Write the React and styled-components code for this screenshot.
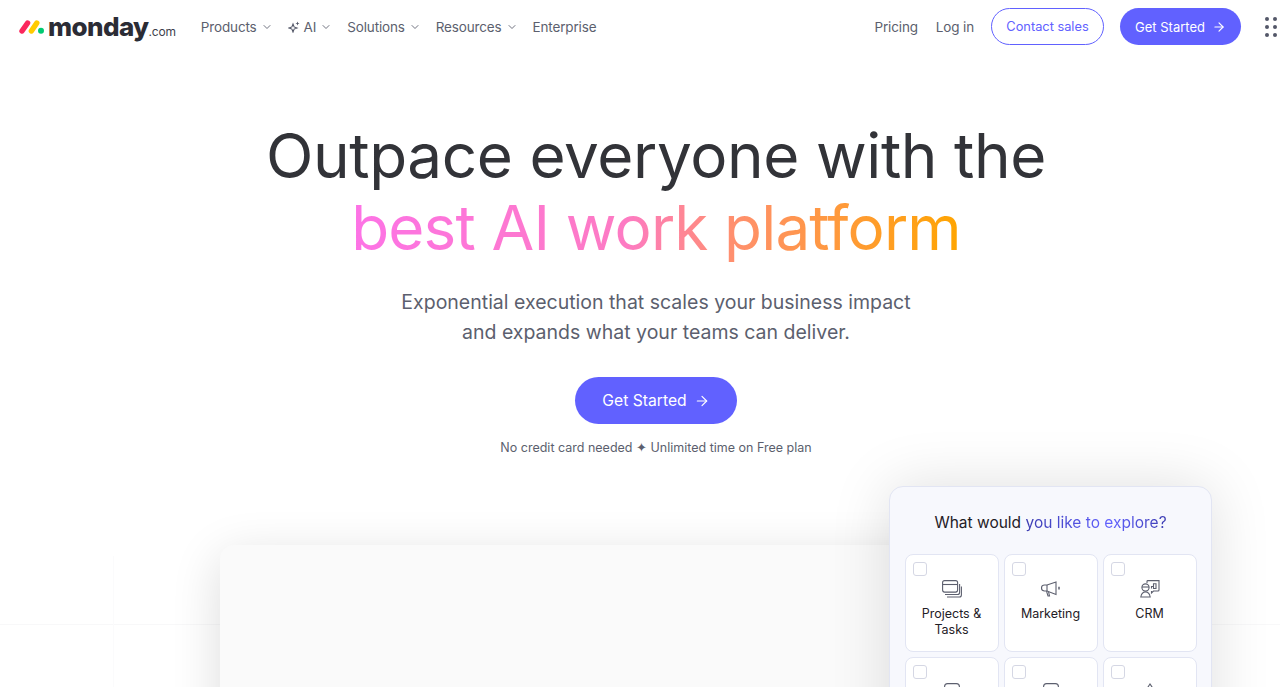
import React from "react";
import styled, { createGlobalStyle } from "styled-components";
import { ChevronDown, ArrowRight } from "lucide-react";

const font = `"Inter", "Liberation Sans", sans-serif`;

const GlobalStyle = createGlobalStyle`
  html, body {
    margin: 0;
    padding: 0;
    height: 100%;
    background: #fff;
    font-family: ${font};
  }
  * { box-sizing: border-box; }
`;

const navLinks = [
  { label: "Products", caret: true },
  { label: "AI", caret: true, sparkle: true },
  { label: "Solutions", caret: true },
  { label: "Resources", caret: true },
  { label: "Enterprise" },
];

const SparkIcon = () => (
  <svg width="12" height="12" viewBox="0 0 12 12" fill="none" stroke="#535768" strokeWidth="1.1">
    <path d="M5 3 L6.1 5.9 L9 7 L6.1 8.1 L5 11 L3.9 8.1 L1 7 L3.9 5.9 Z" />
    <path d="M9.5 .5 L10.1 1.9 L11.5 2.5 L10.1 3.1 L9.5 4.5 L8.9 3.1 L7.5 2.5 L8.9 1.9 Z" fill="#535768" stroke="none" />
  </svg>
);

const LogoMark = () => (
  <svg width="26" height="14" viewBox="0 0 26 14">
    <line x1="3" y1="11" x2="8.6" y2="3" stroke="#fb275d" strokeWidth="5.4" strokeLinecap="round" />
    <line x1="12.4" y1="11" x2="17.8" y2="3" stroke="#ffcb00" strokeWidth="5.4" strokeLinecap="round" />
    <circle cx="22" cy="10.8" r="3" fill="#00ca72" />
  </svg>
);

const MegaphoneIcon = () => (
  <svg width="20" height="16" viewBox="0 0 20 16" fill="none" stroke="#5c5f6e" strokeWidth="1.1">
    <path d="M15 1 L6 4 H3.5 a3 3 0 0 0 0 6 H6 L15 13.5 Z" />
    <path d="M6 4 V10 M5.5 10.2 L7 15 H8.5 L7.6 11" />
    <path d="M18 5.8 V8.4" strokeWidth="1.5" />
  </svg>
);

const ProjectsIcon = () => (
  <svg width="20" height="18" viewBox="0 0 20 18" fill="none" stroke="#5c5f6e" strokeWidth="1.1">
    <rect x=".6" y=".6" width="15" height="11.5" rx="2" />
    <path d="M.6 4.5 H15.6" />
    <path d="M17.6 4 V12.5 a2 2 0 0 1 -2 2 H3" />
    <path d="M19.4 6.5 V15 a2 2 0 0 1 -2 2 H5" />
  </svg>
);

const CrmIcon = () => (
  <svg width="20" height="18" viewBox="0 0 20 18" fill="none" stroke="#5c5f6e" strokeWidth="1.1">
    <circle cx="5.5" cy="7.5" r="3.6" />
    <path d="M2 7 H9" />
    <path d="M.8 17 C1.5 13 3 12 5.5 12 S9.5 13 10.2 17 Z" />
    <path d="M7 3 V1.4 a.8 .8 0 0 1 .8 -.8 H19 V10 a1 1 0 0 1 -1 1 H13.5 L11.5 13 V11" />
    <path d="M11.5 8.5 V6.5 H13.5 V8.5 M13.5 8.5 V3.8 H16 V8.5 Z" />
  </svg>
);

const ScreenIcon = () => (
  <svg width="16" height="18" viewBox="0 0 16 18" fill="none" stroke="#5c5f6e" strokeWidth="1.1">
    <rect x=".6" y=".6" width="14.8" height="16" rx="3" />
  </svg>
);

const PeakIcon = () => (
  <svg width="20" height="18" viewBox="0 0 20 18" fill="none" stroke="#5c5f6e" strokeWidth="1.1">
    <path d="M8 4 L10 1 L12 4 V16 H8 Z" />
  </svg>
);

const options = [
  { label: "Projects & Tasks", Icon: ProjectsIcon },
  { label: "Marketing", Icon: MegaphoneIcon },
  { label: "CRM", Icon: CrmIcon },
  { Icon: ScreenIcon },
  { Icon: ScreenIcon },
  { Icon: PeakIcon },
];

const App = () => (
  <>
    <GlobalStyle />
    <Page>
      <Header>
        <Logo>
          <LogoMark />
          <LogoWord>monday</LogoWord>
          <LogoDomain>.com</LogoDomain>
        </Logo>
        <Nav>
          {navLinks.map((link) => (
            <NavLink key={link.label}>
              {link.sparkle && <SparkIcon />}
              {link.label}
              {link.caret && <ChevronDown size={12} strokeWidth={1.75} />}
            </NavLink>
          ))}
        </Nav>
        <HeaderActions>
          <NavLink>Pricing</NavLink>
          <NavLink>Log in</NavLink>
          <OutlineButton>Contact sales</OutlineButton>
          <PrimaryButton>
            Get Started <ArrowRight size={14} strokeWidth={2} />
          </PrimaryButton>
          <DotsGrid>
            {Array.from({ length: 6 }).map((_, i) => (
              <Dot key={i} />
            ))}
          </DotsGrid>
        </HeaderActions>
      </Header>

      <Hero>
        <Title>
          Outpace everyone with the
          <br />
          <GradientText>best AI work platform</GradientText>
        </Title>
        <Subtitle>
          Exponential execution that scales your business impact
          <br />
          and expands what your teams can deliver.
        </Subtitle>
        <HeroButton>
          Get Started <ArrowRight size={16} strokeWidth={1.75} />
        </HeroButton>
        <Note>No credit card needed ✦ Unlimited time on Free plan</Note>
      </Hero>

      <Showcase>
        <GridLineH />
        <GridLineV />
        <MockBoard />
        <ExplorePanel>
          <PanelTitle>
            What would <PanelAccent>you like to explore?</PanelAccent>
          </PanelTitle>
          <OptionGrid>
            {options.map(({ label, Icon }, i) => (
              <OptionCard key={i}>
                <Check />
                <OptionIcon>
                  <Icon />
                </OptionIcon>
                {label && <OptionLabel>{label}</OptionLabel>}
              </OptionCard>
            ))}
          </OptionGrid>
        </ExplorePanel>
      </Showcase>
    </Page>
  </>
);

const Page = styled.div`
  width: 100%;
  height: 687px;
  overflow: hidden;
  background: #fff;
`;

const Header = styled.header`
  height: 53px;
  display: flex;
  align-items: center;
  padding: 0 3px 0 19px;
`;

const Logo = styled.div`
  display: flex;
  align-items: baseline;
  color: #2b2c35;
  svg {
    align-self: center;
    margin-right: 3px;
  }
`;

const LogoWord = styled.span`
  font-size: 26px;
  font-weight: 800;
  letter-spacing: -0.6px;
`;

const LogoDomain = styled.span`
  font-size: 12px;
  letter-spacing: -0.2px;
  color: #3d3f4c;
`;

const Nav = styled.nav`
  display: flex;
  align-items: center;
  gap: 15px;
  margin-left: 25px;
`;

const NavLink = styled.a`
  display: flex;
  align-items: center;
  gap: 4px;
  font-size: 13.5px;
  letter-spacing: -0.15px;
  color: #5c5f6e;
  white-space: nowrap;
`;

const HeaderActions = styled.div`
  display: flex;
  align-items: center;
  gap: 18px;
  margin-left: auto;
`;

const OutlineButton = styled.button`
  width: 113px;
  height: 37px;
  margin-left: -1px;
  border: 1.5px solid #6161ff;
  border-radius: 19px;
  background: #fff;
  color: #6161ff;
  font-family: ${font};
  font-size: 12.8px;
  padding: 0;
`;

const PrimaryButton = styled.button`
  display: flex;
  align-items: center;
  justify-content: center;
  gap: 7px;
  width: 121px;
  height: 37px;
  margin-left: -2px;
  border: none;
  border-radius: 19px;
  background: #6161ff;
  color: #fff;
  font-family: ${font};
  font-size: 13px;
  padding: 0;
`;

const DotsGrid = styled.div`
  display: grid;
  grid-template-columns: repeat(2, 4px);
  grid-auto-rows: 4px;
  gap: 4px;
  margin-left: 6px;
`;

const Dot = styled.span`
  width: 4px;
  height: 4px;
  border-radius: 50%;
  background: #535768;
`;

const Hero = styled.section`
  display: flex;
  flex-direction: column;
  align-items: center;
  padding-top: 67px;
  padding-left: 32px;
`;

const Title = styled.h1`
  margin: 0;
  text-align: center;
  font-size: 62px;
  font-weight: 400;
  line-height: 72px;
  letter-spacing: -0.4px;
  color: #323338;
`;

const GradientText = styled.span`
  letter-spacing: -0.85px;
  background: linear-gradient(90deg, #fd73e6 0%, #fd7bc3 45%, #ff8f70 62%, #ffa500 100%);
  -webkit-background-clip: text;
  background-clip: text;
  color: transparent;
`;

const Subtitle = styled.p`
  margin: 23px 0 0;
  text-align: center;
  font-size: 19.5px;
  font-weight: 400;
  line-height: 30px;
  color: #5c5f6e;
`;

const HeroButton = styled.button`
  display: flex;
  align-items: center;
  justify-content: center;
  gap: 7px;
  width: 162px;
  height: 47px;
  margin-top: 30px;
  border: none;
  border-radius: 24px;
  background: #6161ff;
  color: #fff;
  font-family: ${font};
  font-size: 15.7px;
`;

const Note = styled.div`
  margin-top: 16px;
  font-size: 12.5px;
  line-height: 16px;
  color: #5c5f6e;
`;

const Showcase = styled.section`
  position: relative;
  height: 240px;
`;

const GridLineH = styled.div`
  position: absolute;
  left: 0;
  right: 0;
  top: 168px;
  height: 1px;
  background: #f8f8f9;
`;

const GridLineV = styled.div`
  position: absolute;
  left: 113px;
  top: 100px;
  bottom: 0;
  width: 1px;
  background: #fbfbfc;
`;

const MockBoard = styled.div`
  position: absolute;
  left: 220px;
  top: 89px;
  width: 840px;
  height: 400px;
  border-radius: 14px;
  background: #fafafa;
  box-shadow: 0 12px 50px rgba(0, 0, 0, 0.14);
`;

const ExplorePanel = styled.div`
  position: absolute;
  left: 889px;
  top: 30px;
  width: 323px;
  height: 300px;
  padding: 26px 15px 0;
  border: 1px solid #e2e5f3;
  border-radius: 14px;
  background: #f7f8fd;
  box-shadow: 0 0 60px rgba(0, 0, 0, 0.13);
`;

const PanelTitle = styled.div`
  text-align: center;
  font-size: 15.5px;
  line-height: 20px;
  color: #1f2026;
`;

const PanelAccent = styled.span`
  background: linear-gradient(90deg, #3b3bb0 0%, #6161ff 60%, #3b3bb0 100%);
  -webkit-background-clip: text;
  background-clip: text;
  color: transparent;
`;

const OptionGrid = styled.div`
  display: grid;
  grid-template-columns: repeat(3, 94px);
  grid-auto-rows: 98px;
  gap: 5px;
  justify-content: center;
  margin-top: 21px;
`;

const OptionCard = styled.div`
  position: relative;
  display: flex;
  flex-direction: column;
  align-items: center;
  padding-top: 24px;
  border: 1px solid #e2e5f3;
  border-radius: 8px;
  background: #fff;
`;

const OptionIcon = styled.div`
  display: flex;
  align-items: center;
  justify-content: center;
  height: 20px;
`;

const Check = styled.span`
  position: absolute;
  left: 7px;
  top: 7px;
  width: 14px;
  height: 14px;
  border: 1px solid #d5d7e4;
  border-radius: 3px;
  background: #fff;
`;

const OptionLabel = styled.div`
  margin-top: 7px;
  padding: 0 10px;
  text-align: center;
  font-size: 12.5px;
  line-height: 16px;
  color: #1f2026;
`;

export default App;
